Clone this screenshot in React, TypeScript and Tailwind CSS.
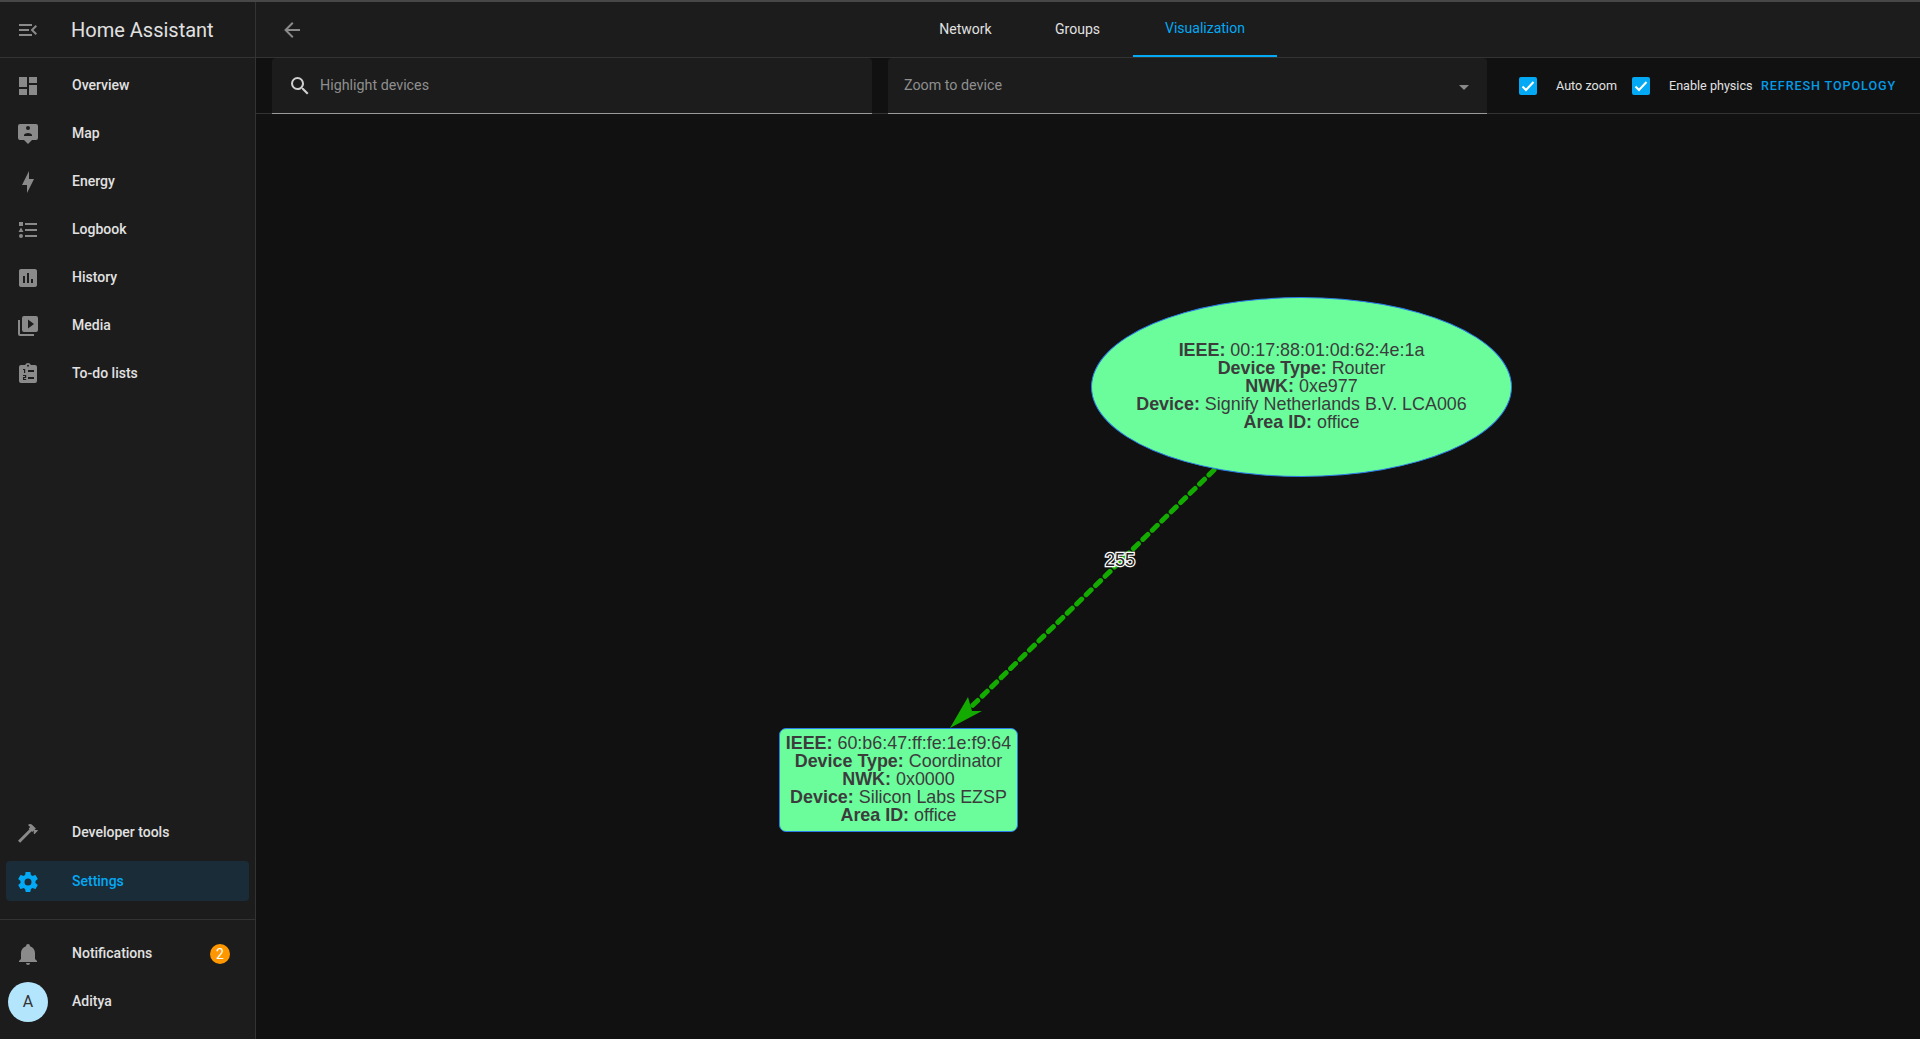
const ICONS = {
  menuOpen: "M21,15.61L19.59,17L14.58,12L19.59,7L21,8.39L17.44,12L21,15.61M3,6H16V8H3V6M3,13V11H13V13H3M3,18V16H16V18H3Z",
  dashboard: "M13,3V9H21V3M13,21H21V11H13M3,21H11V15H3M3,13H11V3H3V13Z",
  map: "M2,4A2,2 0 0,1 4,2H20A2,2 0 0,1 22,4V16A2,2 0 0,1 20,18H16L12,22L8,18H4A2,2 0 0,1 2,16V4M16,14V13C16,11.67 13.33,11 12,11C10.67,11 8,11.67 8,13V14H16M12,4A2,2 0 0,0 10,6A2,2 0 0,0 12,8A2,2 0 0,0 14,6A2,2 0 0,0 12,4Z",
  energy: "M11 15H6L13 1V9H18L11 23V15Z",
  logbook: "M5,9.5L7.5,14H2.5L5,9.5M3,4H7V8H3V4M5,20A2,2 0 0,0 7,18A2,2 0 0,0 5,16A2,2 0 0,0 3,18A2,2 0 0,0 5,20M9,5V7H21V5H9M9,19H21V17H9V19M9,13H21V11H9V13Z",
  history: "M19 3H5C3.9 3 3 3.9 3 5V19C3 20.1 3.9 21 5 21H19C20.1 21 21 20.1 21 19V5C21 3.9 20.1 3 19 3M9 17H7V10H9V17M13 17H11V7H13V17M17 17H15V13H17V17Z",
  media: "M4,6H2V20A2,2 0 0,0 4,22H18V20H4V6M20,2H8A2,2 0 0,0 6,4V16A2,2 0 0,0 8,18H20A2,2 0 0,0 22,16V4A2,2 0 0,0 20,2M12,14.5V5.5L18,10L12,14.5Z",
  todo: "M19,3H14.82C14.4,1.84 13.3,1 12,1C10.7,1 9.6,1.84 9.18,3H5A2,2 0 0,0 3,5V19A2,2 0 0,0 5,21H19A2,2 0 0,0 21,19V5A2,2 0 0,0 19,3M12,2.8A1,1 0 0,0 11,3.8A1,1 0 0,0 12,4.8A1,1 0 0,0 13,3.8A1,1 0 0,0 12,2.8M7,7V8H8V11H9.2V7H7M12,8V10H18V8H12M7,13V14H9V15H7V18H10.2V17H8.2V16H10.2V13H7M12,15V17H18V15H12Z",
  hammer: "M2 19.63L13.43 8.2L12.72 7.5L14.14 6.07L12 3.89C13.2 2.7 15.09 2.7 16.27 3.89L19.87 7.5L18.45 8.91H21.29L22 9.62L18.45 13.21L17.74 12.5V9.62L16.27 11.04L15.56 10.33L4.13 21.76L2 19.63Z",
  cog: "M12,15.5A3.5,3.5 0 0,1 8.5,12A3.5,3.5 0 0,1 12,8.5A3.5,3.5 0 0,1 15.5,12A3.5,3.5 0 0,1 12,15.5M19.43,12.97C19.47,12.65 19.5,12.33 19.5,12C19.5,11.67 19.47,11.34 19.43,11L21.54,9.37C21.73,9.22 21.78,8.95 21.66,8.73L19.66,5.27C19.54,5.05 19.27,4.96 19.05,5.05L16.56,6.05C16.04,5.66 15.5,5.32 14.87,5.07L14.5,2.42C14.46,2.18 14.25,2 14,2H10C9.75,2 9.54,2.18 9.5,2.42L9.13,5.07C8.5,5.32 7.96,5.66 7.44,6.05L4.95,5.05C4.73,4.96 4.46,5.05 4.34,5.27L2.34,8.73C2.21,8.95 2.27,9.22 2.46,9.37L4.57,11C4.53,11.34 4.5,11.67 4.5,12C4.5,12.33 4.53,12.65 4.57,12.97L2.46,14.63C2.27,14.78 2.21,15.05 2.34,15.27L4.34,18.73C4.46,18.95 4.73,19.03 4.95,18.95L7.44,17.94C7.96,18.34 8.5,18.68 9.13,18.93L9.5,21.58C9.54,21.82 9.75,22 10,22H14C14.25,22 14.46,21.82 14.5,21.58L14.87,18.93C15.5,18.67 16.04,18.34 16.56,17.94L19.05,18.95C19.27,19.03 19.54,18.95 19.66,18.73L21.66,15.27C21.78,15.05 21.73,14.78 21.54,14.63L19.43,12.97Z",
  bell: "M21,19V20H3V19L5,17V11C5,7.9 7.03,5.17 10,4.29C10,4.19 10,4.1 10,4A2,2 0 0,1 12,2A2,2 0 0,1 14,4C14,4.1 14,4.19 14,4.29C16.97,5.17 19,7.9 19,11V17L21,19M14,21A2,2 0 0,1 12,23A2,2 0 0,1 10,21",
  arrowLeft: "M20,11V13H8L13.5,18.5L12.08,19.92L4.16,12L12.08,4.08L13.5,5.5L8,11H20Z",
  magnify: "M9.5,3A6.5,6.5 0 0,1 16,9.5C16,11.11 15.41,12.59 14.44,13.73L14.71,14H15.5L20.5,19L19,20.5L14,15.5V14.71L13.73,14.44C12.59,15.41 11.11,16 9.5,16A6.5,6.5 0 0,1 3,9.5A6.5,6.5 0 0,1 9.5,3M9.5,5C7,5 5,7 5,9.5C5,12 7,14 9.5,14C12,14 14,12 14,9.5C14,7 12,5 9.5,5Z",
};

const TOP_ITEMS = [
  { label: "Overview", icon: ICONS.dashboard },
  { label: "Map", icon: ICONS.map },
  { label: "Energy", icon: ICONS.energy },
  { label: "Logbook", icon: ICONS.logbook },
  { label: "History", icon: ICONS.history },
  { label: "Media", icon: ICONS.media },
  { label: "To-do lists", icon: ICONS.todo },
];

function Icon({ d, className }: { d: string; className?: string }) {
  return (
    <svg viewBox="0 0 24 24" className={className} fill="currentColor">
      <path d={d} fillRule="evenodd" />
    </svg>
  );
}

function NavItem({ label, icon }: { label: string; icon: string }) {
  return (
    <div className="flex h-12 items-center pl-4">
      <Icon d={icon} className="mt-[2px] h-6 w-6 text-[#8a8a8a]" />
      <span className="ml-8 text-[14px] font-medium text-[#e1e1e1]">{label}</span>
    </div>
  );
}

function Sidebar() {
  return (
    <aside className="flex w-[256px] shrink-0 flex-col border-r border-[#333333] bg-[#1c1c1c]">
      <div className="flex h-[56px] shrink-0 items-center border-b border-[#333333] pl-4">
        <Icon d={ICONS.menuOpen} className="h-6 w-6 text-[#8a8a8a]" />
        <span className="ml-[31px] text-[20px] text-[#e1e1e1]">Home Assistant</span>
      </div>
      <nav className="flex flex-col pt-[3px]">
        {TOP_ITEMS.map((item) => (
          <NavItem key={item.label} label={item.label} icon={item.icon} />
        ))}
      </nav>
      <div className="mt-auto flex flex-col pb-[13px]">
        <NavItem label="Developer tools" icon={ICONS.hammer} />
        <div className="mx-[6px] mt-[5px] flex h-10 items-center rounded bg-[#1a2c37] pl-[10px]">
          <Icon d={ICONS.cog} className="mt-[2px] h-6 w-6 text-[#03a9f4]" />
          <span className="ml-8 text-[14px] font-medium text-[#03a9f4]">Settings</span>
        </div>
        <div className="mt-[18px] border-t border-[#333333] pt-[10px]">
          <div className="flex h-12 items-center pl-4">
            <Icon d={ICONS.bell} className="h-6 w-6 text-[#8a8a8a]" />
            <span className="ml-8 pb-[2px] text-[14px] font-medium text-[#e1e1e1]">Notifications</span>
            <span className="ml-auto mr-[25px] flex h-5 w-5 items-center justify-center rounded-full bg-[#ff9800] text-[14px] text-white">
              2
            </span>
          </div>
          <div className="flex h-12 items-center pl-2">
            <div className="flex h-10 w-10 items-center justify-center rounded-full bg-[#b3e5fc] text-[16px] text-[#333333]">
              A
            </div>
            <span className="ml-6 pb-[2px] text-[14px] font-medium text-[#e1e1e1]">Aditya</span>
          </div>
        </div>
      </div>
    </aside>
  );
}

function Header() {
  return (
    <header className="flex h-[56px] shrink-0 items-center border-b border-[#333333] bg-[#1c1c1c]">
      <Icon d={ICONS.arrowLeft} className="ml-[24px] h-6 w-6 text-[#8a8a8a]" />
      <div className="flex h-full flex-1 items-stretch pl-[605px] text-[14px]">
        <div className="flex w-[113px] items-center justify-center pb-[1px] text-[#e1e1e1]">Network</div>
        <div className="flex w-[111px] items-center justify-center pb-[1px] text-[#e1e1e1]">Groups</div>
        <div className="flex w-[144px] items-center justify-center border-b-2 border-[#03a9f4] text-[#03a9f4]">
          Visualization
        </div>
      </div>
    </header>
  );
}

function CheckBox({ className }: { className?: string }) {
  return (
    <svg viewBox="0 0 18 18" className={`h-[18px] w-[18px] shrink-0 ${className ?? ""}`}>
      <rect width="18" height="18" rx="2" fill="#03a9f4" />
      <path d="M3.5 9.5L7 13L14.5 5" fill="none" stroke="#ffffff" strokeWidth="2" />
    </svg>
  );
}

function Toolbar() {
  return (
    <div className="flex h-[56px] shrink-0 items-stretch border-b border-[#333333] pl-4">
      <div className="-mb-px flex w-[600px] items-center rounded-t border-b border-[#9a9a9a] bg-[#1c1c1c] pl-4">
        <Icon d={ICONS.magnify} className="h-6 w-6 text-[#d0d0d0]" />
        <span className="ml-2 text-[14.3px] text-[#8f8f8f]">Highlight devices</span>
      </div>
      <div className="-mb-px ml-4 flex w-[599px] items-center justify-between rounded-t border-b border-[#9a9a9a] bg-[#1c1c1c] pl-4 pr-[18px]">
        <span className="text-[14.3px] text-[#8f8f8f]">Zoom to device</span>
        <span className="mt-[3px] h-0 w-0 border-x-[5px] border-t-[5px] border-x-transparent border-t-[#8a8a8a]" />
      </div>
      <div className="flex items-center text-[12.6px] whitespace-nowrap text-[#e1e1e1]">
        <CheckBox className="ml-[32px]" />
        <span className="ml-[19px] mt-[2px] w-[76px]">Auto zoom</span>
        <CheckBox />
        <span className="ml-[19px] mt-[2px] w-[92px]">Enable physics</span>
        <span className="mt-[2px] font-medium tracking-[0.9px] text-[#039be5]">REFRESH TOPOLOGY</span>
      </div>
    </div>
  );
}

// node offsets are relative to the graph canvas
function GraphNode({ lines, className }: { lines: string[][]; className: string }) {
  return (
    <div className={`absolute flex flex-col items-center justify-center border border-[#2b7ce9] bg-[#6bfd9c] font-['Liberation_Sans',Arial,sans-serif] text-[17.9px] leading-[18px] whitespace-nowrap text-[#3c3c3c] ${className}`}>
      {lines.map(([key, value]) => (
        <div key={key}>
          <b>{key}</b> {value}
        </div>
      ))}
    </div>
  );
}

function Graph() {
  return (
    <div className="relative flex-1 overflow-hidden bg-[#111111]">
      <svg className="absolute inset-0 h-full w-full">
        <line x1="958" y1="356" x2="714" y2="594" stroke="#14ab00" strokeWidth="5" strokeDasharray="7 6.2" strokeLinecap="round" />
        <path d="M694 614L712 583L716 597L726 597Z" fill="#14ab00" />
        <text
          x="864"
          y="452"
          textAnchor="middle"
          fontFamily="'Liberation Sans', Arial, sans-serif"
          fontSize="18"
          fill="#222222"
          stroke="#ffffff"
          strokeWidth="2.5"
          paintOrder="stroke"
        >
          255
        </text>
      </svg>
      <GraphNode
        className="left-[835px] top-[183px] h-[180px] w-[421px] rounded-[50%] pb-[2px]"
        lines={[
          ["IEEE:", "00:17:88:01:0d:62:4e:1a"],
          ["Device Type:", "Router"],
          ["NWK:", "0xe977"],
          ["Device:", "Signify Netherlands B.V. LCA006"],
          ["Area ID:", "office"],
        ]}
      />
      <GraphNode
        className="left-[523px] top-[614px] h-[104px] w-[239px] rounded-[7px] pb-[2px]"
        lines={[
          ["IEEE:", "60:b6:47:ff:fe:1e:f9:64"],
          ["Device Type:", "Coordinator"],
          ["NWK:", "0x0000"],
          ["Device:", "Silicon Labs EZSP"],
          ["Area ID:", "office"],
        ]}
      />
    </div>
  );
}

export default function App() {
  return (
    <div className="flex h-[1039px] w-[1920px] flex-col overflow-hidden bg-[#111111] font-['Roboto',sans-serif]">
      <div className="h-[2px] shrink-0 bg-[#474747]" />
      <div className="flex min-h-0 flex-1">
        <Sidebar />
        <main className="flex min-w-0 flex-1 flex-col">
          <Header />
          <Toolbar />
          <Graph />
        </main>
      </div>
    </div>
  );
}
